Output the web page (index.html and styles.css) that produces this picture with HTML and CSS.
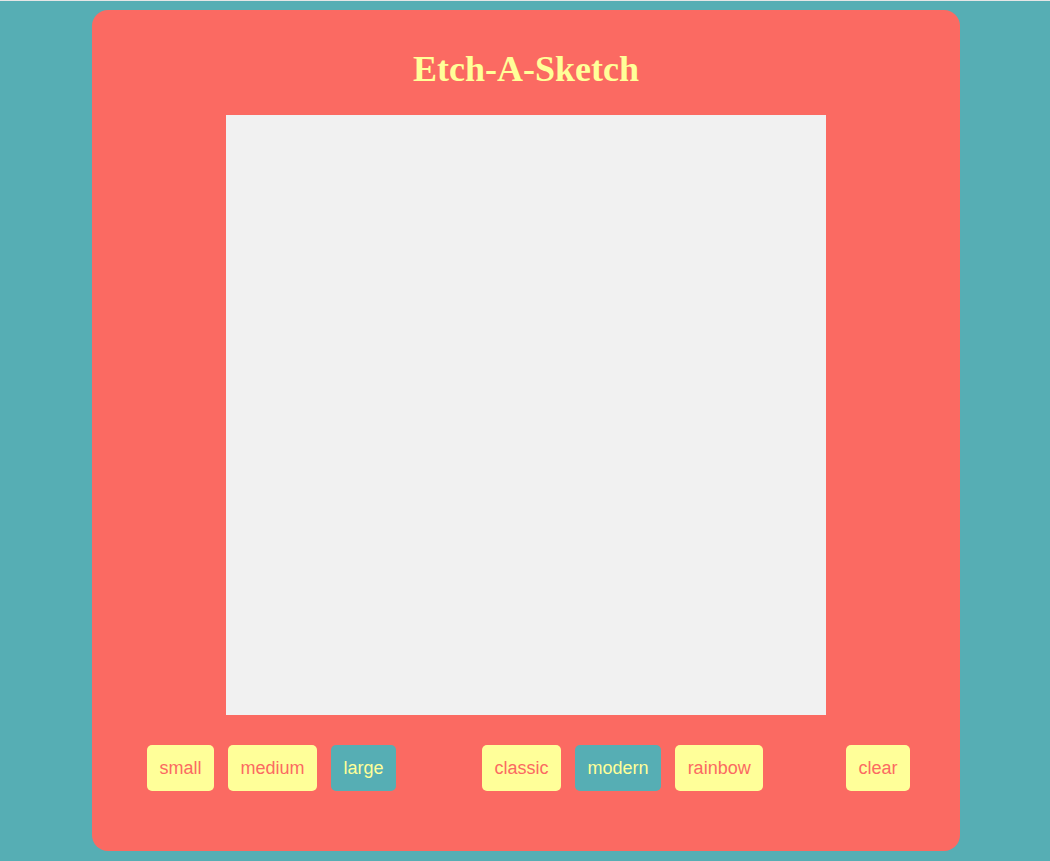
FILE: index.html
```html
<!DOCTYPE html>
<html lang="en">
<head>
<meta charset="utf-8">
<title>Etch-A-Sketch</title>
<link rel="stylesheet" href="styles.css">
</head>
<body>
<main class="frame">
  <h1 class="title">Etch-A-Sketch</h1>
  <div class="board"></div>
  <div class="controls">
    <div class="group">
      <button class="btn">small</button>
      <button class="btn">medium</button>
      <button class="btn active">large</button>
    </div>
    <div class="group group-mode">
      <button class="btn">classic</button>
      <button class="btn active">modern</button>
      <button class="btn">rainbow</button>
    </div>
    <div class="group group-clear">
      <button class="btn">clear</button>
    </div>
  </div>
</main>
</body>
</html>
```
FILE: styles.css
```css
html, body {
  margin: 0;
  padding: 0;
}
body {
  background: #56aeb4;
  border-top: 1px solid #e6e6e6;
  min-height: 860px;
}
.frame {
  width: 868px;
  height: 841px;
  box-sizing: border-box;
  margin: 9px 0 0 92px;
  background: #fb6a62;
  border-radius: 16px;
  padding-top: 39px;
  display: flex;
  flex-direction: column;
  align-items: center;
}
.title {
  margin: 0 0 25px;
  font-family: "Liberation Serif", "Times New Roman", serif;
  font-weight: bold;
  font-size: 36px;
  line-height: 41px;
  color: #ffff99;
}
.board {
  width: 600px;
  height: 600px;
  background: #f1f1f1;
}
.controls {
  align-self: stretch;
  margin-top: 30px;
  padding: 0 50px 0 55px;
  display: flex;
}
.group {
  display: flex;
  gap: 14px;
}
.group-mode {
  margin-left: 86px;
}
.group-clear {
  margin-left: auto;
}
.btn {
  font-family: "Liberation Sans", Arial, sans-serif;
  font-size: 18px;
  line-height: 22px;
  padding: 12px 12.5px;
  border: none;
  border-radius: 5px;
  background: #ffff99;
  color: #fb6a62;
}
.btn.active {
  background: #56aeb4;
  color: #ffff99;
}
```
